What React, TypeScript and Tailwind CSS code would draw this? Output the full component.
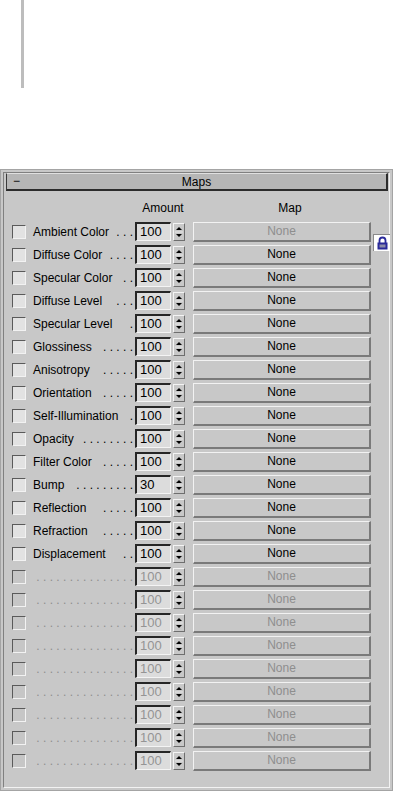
import React from 'react';

interface MapRow {
    name: string;
    dots: string;
    value: string;
    enabled: boolean;
    mapDisabled?: boolean;
}

const EMPTY = '. . . . . . . . . . . . . . .';

const rows: MapRow[] = [
    { name: 'Ambient Color', dots: '. . .', value: '100', enabled: true, mapDisabled: true },
    { name: 'Diffuse Color', dots: '. . . .', value: '100', enabled: true },
    { name: 'Specular Color', dots: '. .', value: '100', enabled: true },
    { name: 'Diffuse Level', dots: '. . .', value: '100', enabled: true },
    { name: 'Specular Level', dots: '.', value: '100', enabled: true },
    { name: 'Glossiness', dots: '. . . . .', value: '100', enabled: true },
    { name: 'Anisotropy', dots: '. . . . .', value: '100', enabled: true },
    { name: 'Orientation', dots: '. . . . .', value: '100', enabled: true },
    { name: 'Self-Illumination', dots: '.', value: '100', enabled: true },
    { name: 'Opacity', dots: '. . . . . . . .', value: '100', enabled: true },
    { name: 'Filter Color', dots: '. . . . .', value: '100', enabled: true },
    { name: 'Bump', dots: '. . . . . . . . .', value: '30', enabled: true },
    { name: 'Reflection', dots: '. . . . .', value: '100', enabled: true },
    { name: 'Refraction', dots: '. . . . .', value: '100', enabled: true },
    { name: 'Displacement', dots: '. .', value: '100', enabled: true },
    ...Array.from({ length: 9 }, () => ({ name: '', dots: EMPTY, value: '100', enabled: false })),
];

const Spinner: React.FC = () => (
    <div className="w-[12px] h-[18px] border-t border-l border-t-[#f4f4f4] border-l-[#f4f4f4] border-b border-r border-b-[#6e6e6e] border-r-[#6e6e6e] bg-[#c8c8c8]">
        <svg width="10" height="16" viewBox="0 0 10 16">
            <polygon points="2,6 8,6 5,3" fill="#000" />
            <line x1="1" y1="8" x2="9" y2="8" stroke="#e8e8e8" strokeWidth="1" />
            <polygon points="2,10 8,10 5,13" fill="#000" />
        </svg>
    </div>
);

const LockIcon: React.FC = () => (
    <div className="w-[17px] h-[17px] bg-white border-t border-l border-t-[#8a8a8a] border-l-[#8a8a8a] flex items-center justify-center">
        <svg width="13" height="14" viewBox="0 0 13 14">
            <path d="M3.5 7 V4.5 A3 3 0 0 1 9.5 4.5 V7" fill="none" stroke="#2a2a9a" strokeWidth="1.8" />
            <rect x="1.5" y="6.5" width="10" height="7" fill="#2a2a9a" />
            <rect x="3.5" y="8.5" width="6" height="3" fill="#8c8ca8" />
        </svg>
    </div>
);

export default function App() {
    return (
        <div className="w-[395px] h-[793px] bg-white overflow-hidden" style={{ fontFamily: '"Liberation Sans", Arial, sans-serif' }}>
            <div className="ml-[21px] w-[3px] h-[88px] bg-[#bdbdbd]" />
            <div className="h-[81px]" />
            <div className="w-[393px] border border-[#a4a4a4] bg-[#c8c8c8] p-[2px]">
                <div className="border-t border-l border-t-[#808080] border-l-[#808080] border-b border-r border-b-[#f2f2f2] border-r-[#f2f2f2] pl-[2px] pr-[1px] pb-[15px]">
                    <div className="relative h-[18px] bg-[#b6b6b6] border-t border-l border-t-[#e0e0e0] border-l-[#3a3a3a] border-b-2 border-r-2 border-b-[#2c2c2c] border-r-[#2c2c2c] flex items-center justify-center text-[12px] leading-[14px] text-black">
                        <span className="absolute left-[6px] top-[0px] text-[12px]">−</span>
                        <span>Maps</span>
                    </div>
                    <div className="flex h-[29px] pt-[10px] text-[12px] leading-[14px] text-black">
                        <div className="w-[136px]" />
                        <div className="w-[42px] text-center">Amount</div>
                        <div className="w-[17px]" />
                        <div className="w-[178px] text-center">Map</div>
                    </div>
                    <div className="relative">
                        {rows.map((r, i) => (
                            <div key={i} className="flex items-center h-[23px] pl-[6px] text-[12px] leading-[14px]">
                                <div
                                    className={`w-[14px] h-[14px] border-t border-l border-t-[#5a5a5a] border-l-[#5a5a5a] border-b border-r border-b-[#f2f2f2] border-r-[#f2f2f2] ${r.enabled ? 'bg-[#e2e2e2]' : 'bg-[#c6c6c6]'}`}
                                />
                                <div className={`ml-[7px] w-[100px] flex justify-between whitespace-pre ${r.enabled ? 'text-black' : 'text-[#8e8e8e]'}`}>
                                    <span>{r.name}</span>
                                    <span>{r.dots}</span>
                                </div>
                                <div
                                    className={`ml-[2px] w-[36px] h-[19px] border-t-2 border-l-2 border-t-[#262626] border-l-[#262626] border-b border-r border-b-[#f4f4f4] border-r-[#f4f4f4] bg-[#dcdcdc] pl-[3px] text-[13px] leading-[16px] ${r.enabled ? 'text-black' : 'text-[#949494]'}`}
                                >
                                    {r.value}
                                </div>
                                <div className="ml-[2px]">
                                    <Spinner />
                                </div>
                                <div
                                    className={`ml-[8px] w-[178px] h-[20px] border-t border-l border-t-[#f2f2f2] border-l-[#f2f2f2] border-b-2 border-r-2 border-b-[#7a7a7a] border-r-[#7a7a7a] bg-[#c8c8c8] flex items-center justify-center ${r.enabled && !r.mapDisabled ? 'text-black' : 'text-[#8e8e8e]'}`}
                                >
                                    None
                                </div>
                            </div>
                        ))}
                        <div className="absolute left-[367px] top-[14px]">
                            <LockIcon />
                        </div>
                    </div>
                </div>
            </div>
        </div>
    );
}
